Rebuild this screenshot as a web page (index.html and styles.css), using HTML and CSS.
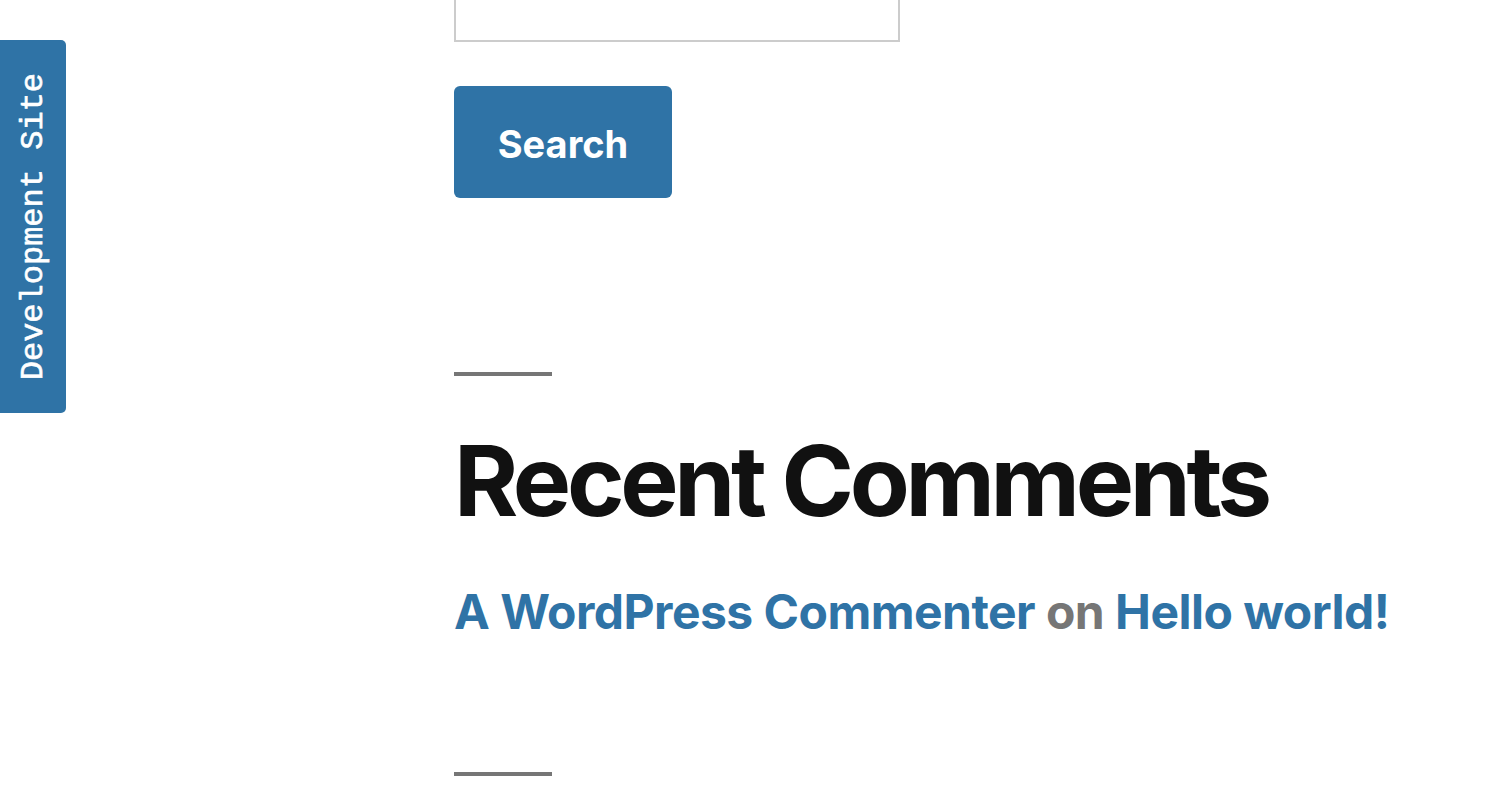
FILE: index.html
```html
<!DOCTYPE html>
<html lang="en">
<head>
<meta charset="utf-8">
<title>Widgets</title>
<link rel="stylesheet" href="styles.css">
</head>
<body>
<div class="dev-tab"><span class="dev-tab-text">Development Site</span></div>
<main class="content">
  <form class="search-form">
    <input class="search-field" type="search" aria-label="Search">
    <button class="search-submit" type="button">Search</button>
  </form>
  <hr class="sep">
  <section class="widget">
    <h2 class="widget-title">Recent Comments</h2>
    <p class="recent-comment"><a href="#" class="link">A WordPress Commenter</a> <span class="muted">on</span> <a href="#" class="link">Hello world!</a></p>
  </section>
  <hr class="sep sep-second">
</main>
</body>
</html>
```

FILE: styles.css
```css
html, body {
  margin: 0;
  padding: 0;
  background: #fff;
  overflow: hidden;
}
body {
  font-family: Inter, "Noto Sans", sans-serif;
  color: #111;
}
.dev-tab {
  position: fixed;
  left: 0;
  top: 40px;
  width: 66px;
  height: 373px;
  background: #2f73a6;
  border-radius: 0 5px 5px 0;
  display: flex;
  align-items: center;
  justify-content: center;
}
.dev-tab-text {
  writing-mode: vertical-rl;
  transform: rotate(180deg);
  font-family: "Courier New", "Liberation Mono", monospace;
  font-weight: normal;
  font-size: 32px;
  line-height: 1;
  color: #fff;
  white-space: nowrap;
  margin-left: 2px;
  -webkit-text-stroke: 0.6px #fff;
}
.content {
  padding-left: 454px;
  display: flex;
  flex-direction: column;
  align-items: flex-start;
}
.search-form {
  display: flex;
  flex-direction: column;
  align-items: flex-start;
  margin: 0;
}
.search-field {
  display: block;
  box-sizing: border-box;
  width: 446px;
  height: 102px;
  margin: -60px 0 0;
  border: 2px solid #ccc;
  background: #fff;
  padding: 0;
}
.search-submit {
  margin-top: 44px;
  width: 218px;
  padding: 39px 0 35px;
  border: 0;
  border-radius: 6px;
  background: #2f73a6;
  color: #fff;
  font-family: Inter, "Noto Sans", sans-serif;
  font-weight: 700;
  font-size: 38px;
  line-height: 38px;
  letter-spacing: 0;
}
.sep {
  width: 98px;
  height: 4px;
  margin: 174px 0 0;
  border: 0;
  background: #767676;
}
.sep-second {
  margin-top: 136px;
}
.widget {
  margin-top: 56px;
}
.widget-title {
  margin: 0;
  font-size: 98px;
  line-height: 98px;
  font-weight: 700;
  letter-spacing: -0.044em;
  color: #111;
}
.recent-comment {
  margin: 58px 0 0;
  font-size: 48px;
  line-height: 48px;
  font-weight: 700;
  letter-spacing: -0.011em;
  white-space: nowrap;
}
.link {
  color: #2f73a6;
  text-decoration: none;
}
.muted {
  color: #767676;
}
```
